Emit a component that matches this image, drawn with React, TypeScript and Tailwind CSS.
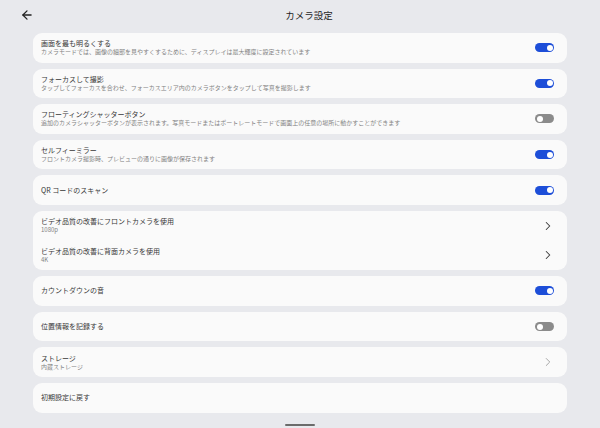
import React from 'react';
import { ArrowLeft, ChevronRight } from 'lucide-react';

type Row = {
  title: string;
  sub?: string;
  kind: 'on' | 'off' | 'chevron' | 'chevronLight' | 'none';
};

const Toggle = ({ on }: { on: boolean }) => (
  <div
    className={
      on
        ? 'w-[19px] h-[9px] rounded-full bg-[#1d4ed8] flex items-center justify-end pr-[1.5px]'
        : 'w-[19px] h-[9px] rounded-full bg-[#8b8b8b] flex items-center justify-start pl-[1.5px]'
    }
  >
    <div className="w-[6px] h-[6px] rounded-full bg-white" />
  </div>
);

const RowItem = ({ row }: { row: Row }) => (
  <div className="h-[29.6px] flex items-center pl-[8px] pr-[13px]">
    <div className="flex-1 flex flex-col min-w-0">
      <div className="text-[7px] leading-[9px] text-[#383838] whitespace-nowrap">{row.title}</div>
      {row.sub && (
        <div className="text-[6px] leading-[8px] text-[#828282] whitespace-nowrap">{row.sub}</div>
      )}
    </div>
    {row.kind === 'on' && <Toggle on />}
    {row.kind === 'off' && <Toggle on={false} />}
    {row.kind === 'chevron' && (
      <ChevronRight size={14} strokeWidth={1.8} className="text-[#3a3a3a] mr-[-1px]" />
    )}
    {row.kind === 'chevronLight' && (
      <ChevronRight size={14} strokeWidth={1.5} className="text-[#9a9a9a] mr-[-1px]" />
    )}
  </div>
);

const groups: Row[][] = [
  [
    {
      title: '画面を最も明るくする',
      sub: 'カメラモードでは、画像の細部を見やすくするために、ディスプレイは最大輝度に設定されています',
      kind: 'on',
    },
  ],
  [
    {
      title: 'フォーカスして撮影',
      sub: 'タップしてフォーカスを合わせ、フォーカスエリア内のカメラボタンをタップして写真を撮影します',
      kind: 'on',
    },
  ],
  [
    {
      title: 'フローティングシャッターボタン',
      sub: '追加のカメラシャッターボタンが表示されます。写真モードまたはポートレートモードで画面上の任意の場所に動かすことができます',
      kind: 'off',
    },
  ],
  [
    {
      title: 'セルフィーミラー',
      sub: 'フロントカメラ撮影時、プレビューの通りに画像が保存されます',
      kind: 'on',
    },
  ],
  [{ title: 'QR コードのスキャン', kind: 'on' }],
  [
    { title: 'ビデオ品質の改善にフロントカメラを使用', sub: '1080p', kind: 'chevron' },
    { title: 'ビデオ品質の改善に背面カメラを使用', sub: '4K', kind: 'chevron' },
  ],
  [{ title: 'カウントダウンの音', kind: 'on' }],
  [{ title: '位置情報を記録する', kind: 'off' }],
  [{ title: 'ストレージ', sub: '内蔵ストレージ', kind: 'chevronLight' }],
  [{ title: '初期設定に戻す', kind: 'none' }],
];

export default function App() {
  return (
    <div
      className="w-[600px] h-[428px] overflow-hidden bg-[#e8e9ed] flex flex-col"
      style={{ fontFamily: '"Noto Sans CJK JP", "Noto Sans", sans-serif' }}
    >
      {/* Header */}
      <div className="h-[30px] flex items-center pl-[20px] pr-[16px] shrink-0">
        <ArrowLeft size={14} strokeWidth={2.2} className="text-[#222]" />
        <div className="flex-1 text-center text-[9.5px] text-[#1f1f1f]">カメラ設定</div>
      </div>

      {/* Settings list */}
      <div className="flex flex-col gap-[6px] px-[33px] pt-[3px]">
        {groups.map((g, i) => (
          <div key={i} className="bg-[#fafafa] rounded-[9px] flex flex-col">
            {g.map((r, j) => (
              <RowItem key={j} row={r} />
            ))}
          </div>
        ))}
      </div>

      {/* Nav handle */}
      <div className="flex-1 flex items-end justify-center pb-[2px]">
        <div className="w-[30px] h-[2px] rounded-full bg-[#6b6b6b]" />
      </div>
    </div>
  );
}
